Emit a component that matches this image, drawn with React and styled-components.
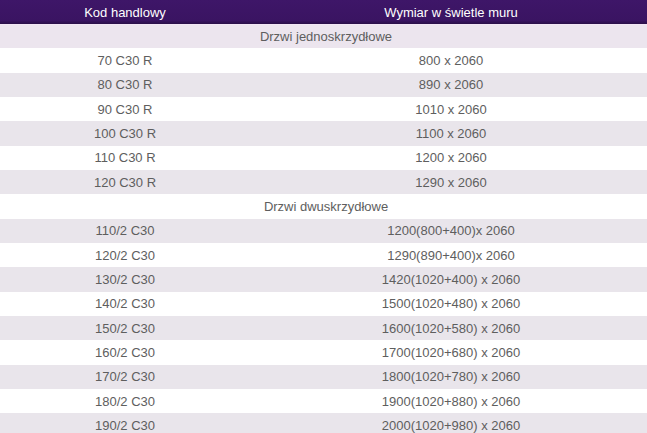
import React from 'react';
import styled, { createGlobalStyle } from 'styled-components';

const GlobalStyle = createGlobalStyle`
  html, body {
    margin: 0;
    padding: 0;
    background: #ffffff;
    overflow: hidden;
  }
  body {
    font-family: "Liberation Sans", Arial, sans-serif;
  }
`;

const Table = styled.div`
  width: 652px;
  display: flex;
  flex-direction: column;
  font-size: 13px;
  color: #5e5e5e;
`;

const HeadRow = styled.div`
  display: grid;
  grid-template-columns: 250px 1fr;
  height: 24px;
  align-items: center;
  background: linear-gradient(#3e1668, #3a1462 85%, #2a0f48);
  color: #ffffff;
`;

const Row = styled.div`
  display: grid;
  grid-template-columns: 250px 1fr;
  height: 24.33px;
  align-items: center;
  background: ${(p) => (p.$shaded ? '#e9e5eb' : '#ffffff')};
`;

const SectionRow = styled.div`
  height: 24.33px;
  display: flex;
  align-items: center;
  justify-content: center;
  background: ${(p) => (p.$shaded ? '#ece5ee' : '#ffffff')};
  border-top: ${(p) => (p.$shaded ? '1px solid #f2e6f4' : 'none')};
  box-sizing: border-box;
`;

const Cell = styled.div`
  text-align: center;
  white-space: pre;
`;

const sections = [
  {
    title: 'Drzwi jednoskrzydłowe',
    rows: [
      ['70 C30 R', '800 x 2060'],
      ['80 C30 R', '890 x 2060'],
      ['90 C30 R', '1010 x 2060'],
      ['100 C30 R', '1100 x 2060'],
      ['110 C30 R', '1200 x 2060'],
      ['120 C30 R', '1290 x 2060'],
    ],
  },
  {
    title: 'Drzwi dwuskrzydłowe',
    rows: [
      ['110/2 C30', '1200(800+400)x 2060'],
      ['120/2 C30', '1290(890+400)x 2060'],
      ['130/2 C30', '1420(1020+400) x 2060'],
      ['140/2 C30', '1500(1020+480) x 2060'],
      ['150/2 C30', '1600(1020+580) x 2060'],
      ['160/2 C30', '1700(1020+680) x 2060'],
      ['170/2 C30', '1800(1020+780) x 2060'],
      ['180/2 C30', '1900(1020+880) x 2060'],
      ['190/2 C30', '2000(1020+980) x 2060'],
    ],
  },
];

export default function App() {
  let index = 0;
  const lines = [];
  sections.forEach((section) => {
    lines.push(
      <SectionRow key={section.title} $shaded={index % 2 === 0}>
        {section.title}
      </SectionRow>
    );
    index++;
    section.rows.forEach(([code, size]) => {
      lines.push(
        <Row key={code} $shaded={index % 2 === 0}>
          <Cell>{code}</Cell>
          <Cell>{size}</Cell>
        </Row>
      );
      index++;
    });
  });

  return (
    <>
      <GlobalStyle />
      <Table>
        <HeadRow>
          <Cell>Kod handlowy</Cell>
          <Cell>Wymiar w świetle muru</Cell>
        </HeadRow>
        {lines}
      </Table>
    </>
  );
}
